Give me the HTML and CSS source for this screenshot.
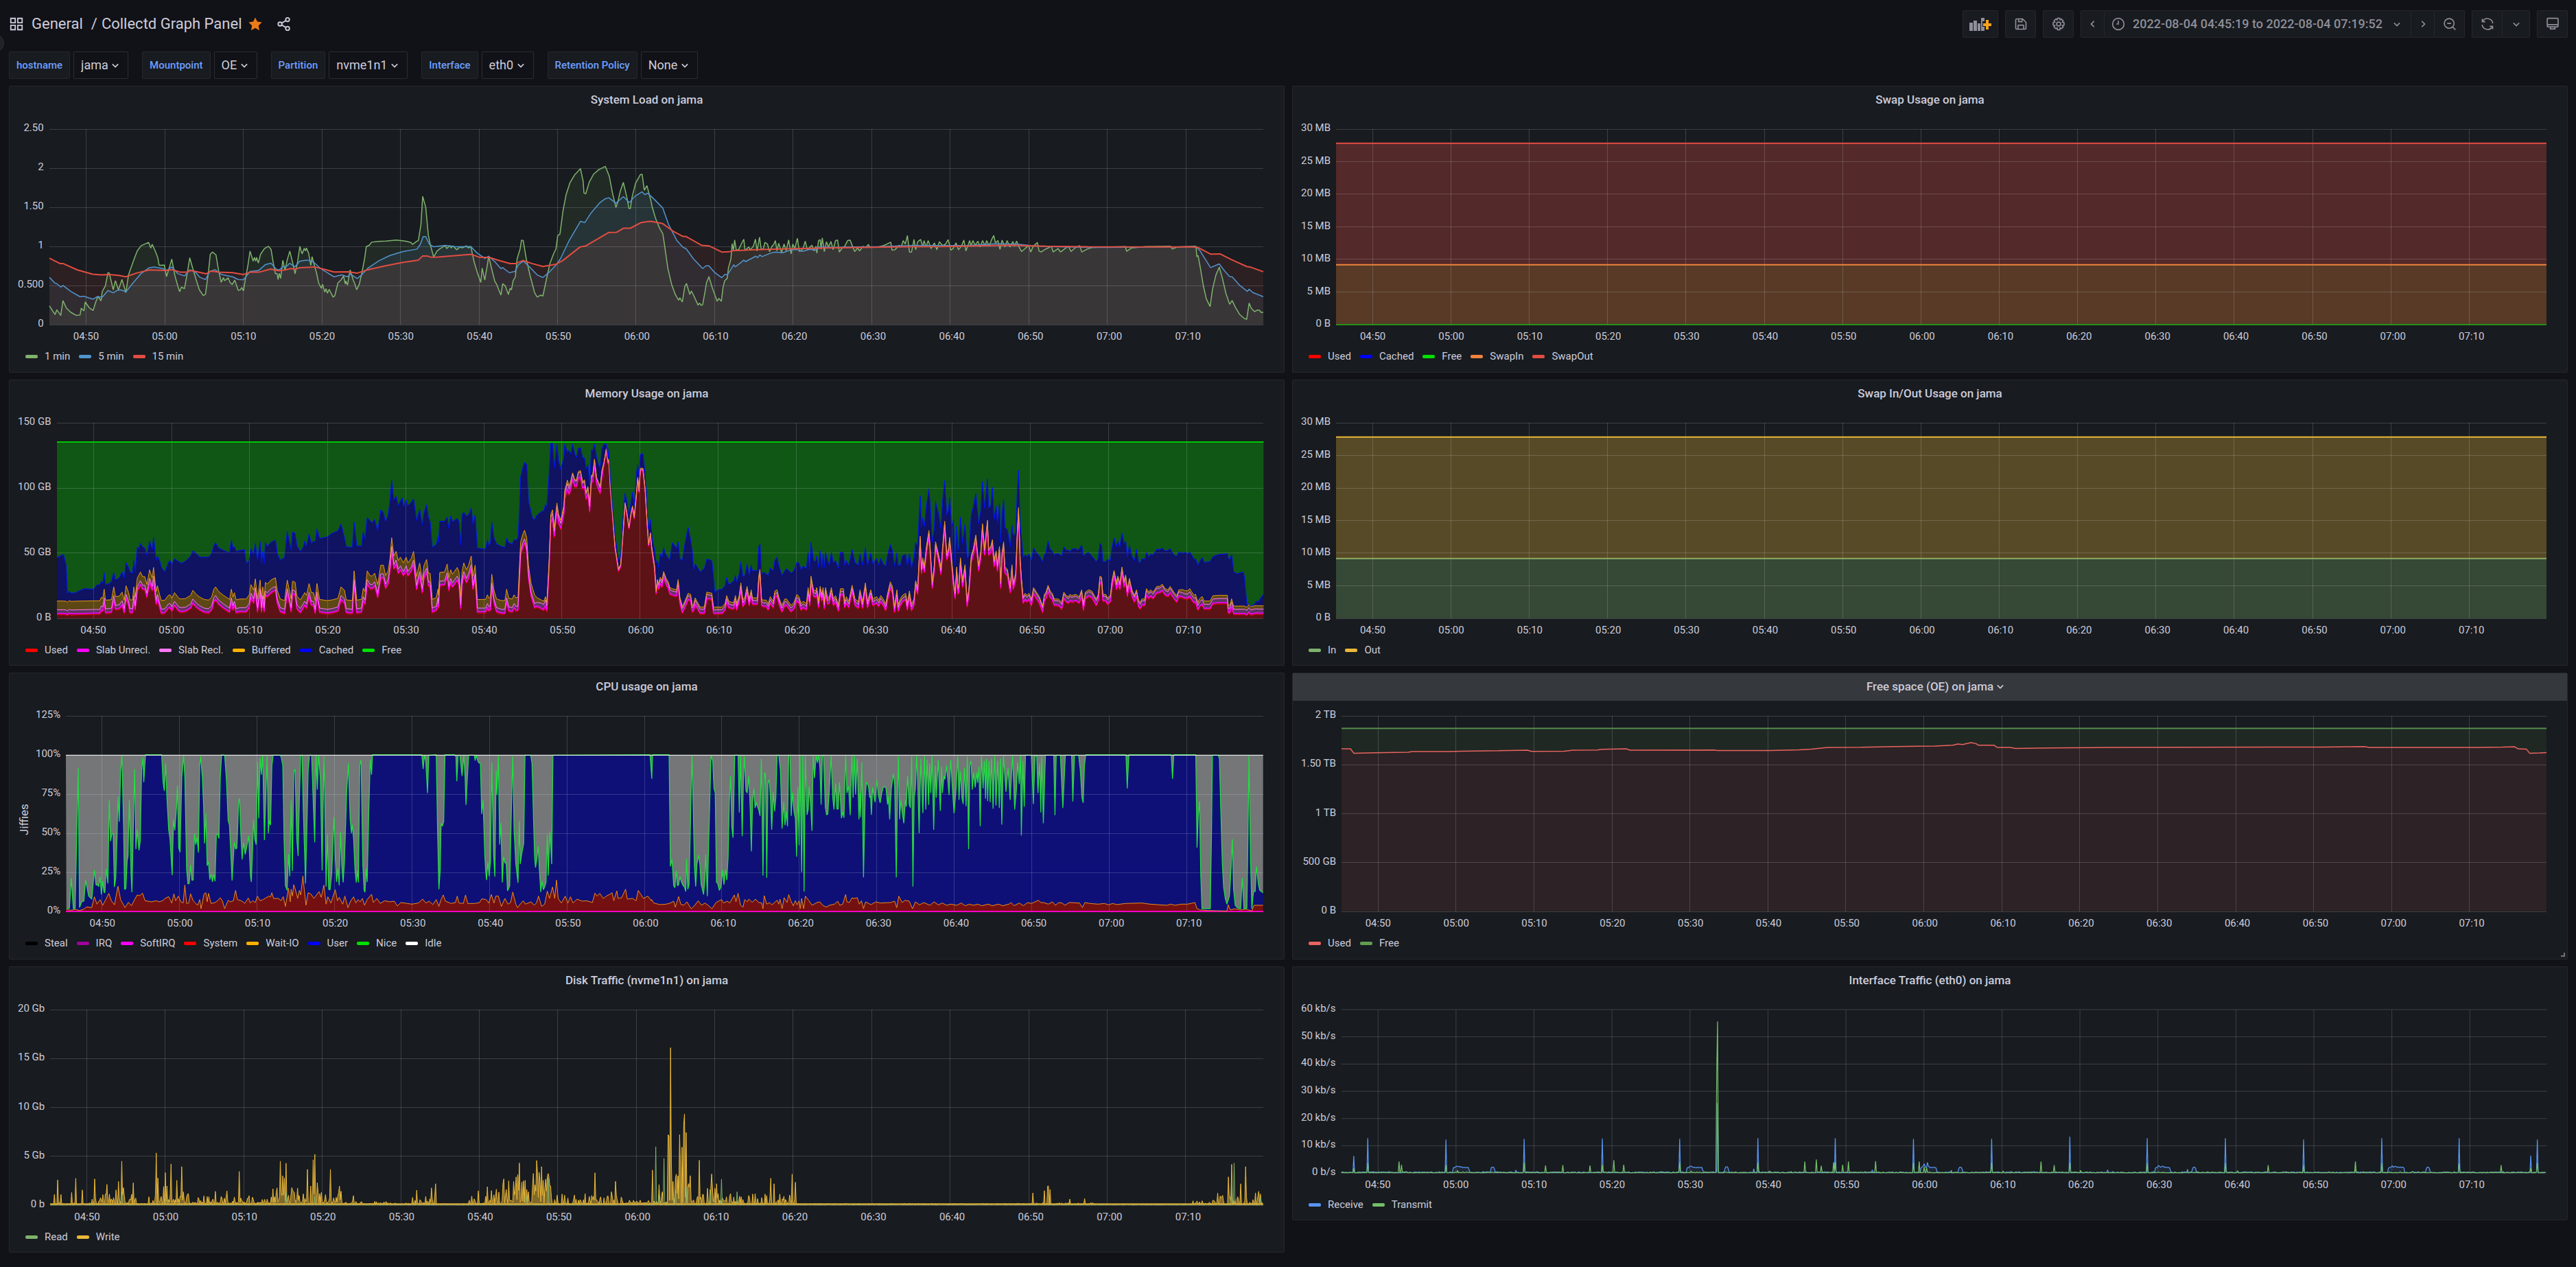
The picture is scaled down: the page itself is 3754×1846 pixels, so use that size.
FILE: index.html
```html
<!DOCTYPE html>
<html lang="en">
<head>
<meta charset="utf-8">
<meta name="viewport" content="width=device-width, initial-scale=1">
<title>Collectd Graph Panel</title>
<link rel="stylesheet" href="styles.css">
</head>
<body>
<svg class="sprite" aria-hidden="true">
  <symbol id="i-down" viewBox="0 0 24 24"><path d="M7 10l5 5 5-5"/></symbol>
  <symbol id="i-left" viewBox="0 0 24 24"><path d="M14 7l-5 5 5 5"/></symbol>
  <symbol id="i-right" viewBox="0 0 24 24"><path d="M10 7l5 5-5 5"/></symbol>
</svg>
<button class="menu-toggle" type="button" aria-label="Open menu"></button>
<header class="topbar">
  <a class="icon-link" href="#" aria-label="Dashboards"><svg class="icon" viewBox="0 0 24 24"><path d="M3 3h7v7H3zM14 3h7v7h-7zM3 14h7v7H3zM14 14h7v7h-7z"/></svg></a>
  <h1 class="crumbs"><a href="#">General</a><span class="slash">/</span><a href="#">Collectd Graph Panel</a></h1>
  <button class="bare star" type="button" aria-label="Unmark as favorite"><svg class="icon" viewBox="0 0 24 24"><path d="M12 1.5l3.2 6.8 7.3 1-5.3 5.2 1.3 7.5L12 18.300l-6.500 3.700 1.300-7.500L1.500 9.300l7.300-1z"/></svg></button>
  <button class="bare share" type="button" aria-label="Share dashboard"><svg class="icon" viewBox="0 0 24 24"><circle cx="5.500" cy="12" r="3"/><circle cx="17.500" cy="5" r="3"/><circle cx="17.500" cy="19" r="3"/><path d="M8.200 10.500l6.700-4M8.200 13.500l6.700 4"/></svg></button>
  <div class="tools">
    <button class="tool wide" type="button" aria-label="Add panel"><svg class="icon-add" viewBox="0 0 32 20"><path class="bars" d="M0 8h5v12H0zM6 5h5v15H6zM12 9h4v11h-4zM17 1h5v5h-3v8h3v6h-5z"/><path class="plus" d="M24 4h4v5h4v4h-4v5h-4v-5h-4V9h4z"/></svg></button>
    <button class="tool" type="button" aria-label="Save dashboard"><svg class="icon" viewBox="0 0 24 24"><path d="M3 5a2 2 0 0 1 2-2h10l6 6v10a2 2 0 0 1-2 2H5a2 2 0 0 1-2-2zM8 3v5h6V3M7 21v-6a1 1 0 0 1 1-1h8a1 1 0 0 1 1 1v6"/></svg></button>
    <button class="tool" type="button" aria-label="Dashboard settings"><svg class="icon" viewBox="0 0 24 24"><circle cx="12" cy="12" r="3.500"/><path d="M10 2h4l.7 2.800 2.400-1.400 2.900 2.900-1.500 2.400 3 .8v4.500l-3 .8 1.500 2.500-2.900 2.800-2.400-1.400L14 22h-4l-.7-3.300-2.400 1.400L4 17.300l1.500-2.500-3-.8V9.500l3-.8L4 6.300l2.900-2.900 2.400 1.400z"/></svg></button>
    <div class="tool-group">
      <button class="tool slim" type="button" aria-label="Earlier"><svg class="icon"><use href="#i-left"/></svg></button>
      <button class="tool range" type="button"><svg class="icon" viewBox="0 0 24 24"><circle cx="12" cy="12" r="10"/><path d="M12 6v6H8.500"/></svg><span>2022-08-04 04:45:19 to 2022-08-04 07:19:52</span><svg class="icon"><use href="#i-down"/></svg></button>
      <button class="tool slim" type="button" aria-label="Later"><svg class="icon"><use href="#i-right"/></svg></button>
      <button class="tool" type="button" aria-label="Zoom out"><svg class="icon" viewBox="0 0 24 24"><circle cx="11" cy="11" r="8.500"/><path d="M7.500 11h7M17.200 17.200L22 22"/></svg></button>
    </div>
    <div class="tool-group">
      <button class="tool" type="button" aria-label="Refresh"><svg class="icon" viewBox="0 0 24 24"><path d="M3 3v5h5M3.500 7.500a9.500 9.500 0 0 1 17.800 3.300M21 21v-5h-5M20.500 16.500A9.500 9.500 0 0 1 2.700 13.200"/></svg></button>
      <button class="tool narrow" type="button" aria-label="Refresh interval"><svg class="icon"><use href="#i-down"/></svg></button>
    </div>
    <button class="tool" type="button" aria-label="Cycle view mode"><svg class="icon" viewBox="0 0 24 24"><path d="M4 2h16a1.500 1.500 0 0 1 1.500 1.500v12A1.500 1.500 0 0 1 20 17H4a1.500 1.500 0 0 1-1.500-1.500v-12A1.500 1.500 0 0 1 4 2zM2.500 13h19M8 17v3.500h8V17"/></svg></button>
  </div>
</header>

<form class="variables">
  <div class="variable"><label for="v-host">hostname</label><span class="picker"><select id="v-host"><option>jama</option></select><svg class="icon"><use href="#i-down"/></svg></span></div>
  <div class="variable"><label for="v-mount">Mountpoint</label><span class="picker"><select id="v-mount"><option>OE</option></select><svg class="icon"><use href="#i-down"/></svg></span></div>
  <div class="variable"><label for="v-part">Partition</label><span class="picker"><select id="v-part"><option>nvme1n1</option></select><svg class="icon"><use href="#i-down"/></svg></span></div>
  <div class="variable"><label for="v-if">Interface</label><span class="picker"><select id="v-if"><option>eth0</option></select><svg class="icon"><use href="#i-down"/></svg></span></div>
  <div class="variable"><label for="v-ret">Retention Policy</label><span class="picker"><select id="v-ret"><option>None</option></select><svg class="icon"><use href="#i-down"/></svg></span></div>
</form>

<main class="dashboard">
  <section class="panel">
    <h2>System Load on jama</h2>
    <div class="chart" data-chart="load"><div class="y-axis"><span>2.50</span><span>2</span><span>1.50</span><span>1</span><span>0.500</span><span>0</span></div></div>
    <ul class="legend"><li class="c-olive">1 min</li><li class="c-sky">5 min</li><li class="c-brick">15 min</li></ul>
  </section>
  <section class="panel">
    <h2>Swap Usage on jama</h2>
    <div class="chart" data-chart="swap"><div class="y-axis"><span>30 MB</span><span>25 MB</span><span>20 MB</span><span>15 MB</span><span>10 MB</span><span>5 MB</span><span>0 B</span></div></div>
    <ul class="legend"><li class="c-red">Used</li><li class="c-blue">Cached</li><li class="c-green">Free</li><li class="c-orange">SwapIn</li><li class="c-brick">SwapOut</li></ul>
  </section>
  <section class="panel">
    <h2>Memory Usage on jama</h2>
    <div class="chart" data-chart="memory"><div class="y-axis"><span>150 GB</span><span>100 GB</span><span>50 GB</span><span>0 B</span></div></div>
    <ul class="legend"><li class="c-red">Used</li><li class="c-magenta">Slab Unrecl.</li><li class="c-pink">Slab Recl.</li><li class="c-amber">Buffered</li><li class="c-blue">Cached</li><li class="c-green">Free</li></ul>
  </section>
  <section class="panel">
    <h2>Swap In/Out Usage on jama</h2>
    <div class="chart" data-chart="swapio"><div class="y-axis"><span>30 MB</span><span>25 MB</span><span>20 MB</span><span>15 MB</span><span>10 MB</span><span>5 MB</span><span>0 B</span></div></div>
    <ul class="legend"><li class="c-olive">In</li><li class="c-yellow">Out</li></ul>
  </section>
  <section class="panel">
    <h2>CPU usage on jama</h2>
    <div class="chart named" data-chart="cpu"><span class="axis-name">Jiffies</span><div class="y-axis"><span>125%</span><span>100%</span><span>75%</span><span>50%</span><span>25%</span><span>0%</span></div></div>
    <ul class="legend"><li class="c-black">Steal</li><li class="c-purple">IRQ</li><li class="c-magenta">SoftIRQ</li><li class="c-red">System</li><li class="c-amber">Wait-IO</li><li class="c-blue">User</li><li class="c-green">Nice</li><li class="c-white">Idle</li></ul>
  </section>
  <section class="panel">
    <h2 class="active">Free space (OE) on jama<svg class="icon"><use href="#i-down"/></svg></h2>
    <div class="chart" data-chart="disk"><div class="y-axis"><span>2 TB</span><span>1.50 TB</span><span>1 TB</span><span>500 GB</span><span>0 B</span></div></div>
    <ul class="legend"><li class="c-coral">Used</li><li class="c-leaf">Free</li></ul>
    <span class="resize"></span>
  </section>
  <section class="panel">
    <h2>Disk Traffic (nvme1n1) on jama</h2>
    <div class="chart" data-chart="traffic"><div class="y-axis"><span>20 Gb</span><span>15 Gb</span><span>10 Gb</span><span>5 Gb</span><span>0 b</span></div></div>
    <ul class="legend"><li class="c-olive">Read</li><li class="c-yellow">Write</li></ul>
  </section>
  <section class="panel short">
    <h2>Interface Traffic (eth0) on jama</h2>
    <div class="chart" data-chart="net"><div class="y-axis"><span>60 kb/s</span><span>50 kb/s</span><span>40 kb/s</span><span>30 kb/s</span><span>20 kb/s</span><span>10 kb/s</span><span>0 b/s</span></div></div>
    <ul class="legend"><li class="c-azure">Receive</li><li class="c-lime">Transmit</li></ul>
  </section>
</main>
<script src="charts.js"></script>
</body>
</html>
```
FILE: styles.css
```css
* { box-sizing: border-box; }
body {
  margin: 0;
  padding: 15px 12px 20px 13px;
  background: #111217;
  color: #ccccdc;
  font: 15px/18px Roboto, "Liberation Sans", sans-serif;
}
.sprite { position: absolute; width: 0; height: 0; }
.icon { width: 22px; height: 22px; fill: none; stroke: currentColor; stroke-width: 2; flex: none; }
button, select { font: inherit; color: inherit; }
a { color: inherit; text-decoration: none; }
.menu-toggle {
  position: absolute; left: -22px; top: 49px; width: 28px; height: 28px;
  padding: 0; border: 1px solid #2c2d33; border-radius: 50%; background: #202226;
}

.topbar { display: flex; align-items: center; height: 40px; }
.icon-link { display: flex; }
.crumbs { display: flex; margin: 0 0 0 11px; font-size: 22px; font-weight: 400; line-height: 30px; }
.slash { margin: 0 6px 0 12px; }
.bare { display: flex; padding: 0; border: 0; background: none; }
.star { margin-left: 8px; color: #eb7b18; }
.star .icon { fill: currentColor; stroke: none; }
.share { margin-left: 20px; }
.tools { display: flex; gap: 10px; margin-left: auto; color: #8e8e99; }
.tool {
  display: flex; align-items: center; justify-content: center;
  width: 45px; height: 40px; padding: 0;
  background: #181b1f; border: 1px solid #25272c; border-radius: 2px;
}
.tool .icon { width: 20px; height: 20px; }
.wide { width: 52px; }
.slim { width: 35px; }
.narrow { width: 41px; }
.range { width: 448px; justify-content: space-between; padding: 0 10px; font-size: 18px; font-weight: 500; }
.tool-group { display: flex; }
.tool-group .tool + .tool { margin-left: -1px; }
.icon-add { width: 32px; height: 20px; }
.bars { fill: #8e8e99; }
.plus { fill: #f9a11f; }

.variables { display: flex; gap: 20px; margin-top: 20px; }
.variable { display: flex; gap: 5px; height: 40px; }
.variable label {
  display: flex; align-items: center; padding: 0 10px;
  background: #181b1f; border: 1px solid #25272c; border-radius: 2px;
  color: #6e9fff; font-weight: 500;
}
.picker {
  display: flex; align-items: center; padding: 0 8px 0 10px;
  border: 1px solid #2c2d33; border-radius: 2px;
}
.picker select {
  appearance: none; padding: 0; border: 0; background: none;
  font-size: 18px; line-height: 22px;
}
.picker .icon { width: 20px; height: 20px; }

.dashboard {
  display: grid; grid-template-columns: repeat(2, minmax(0, 1fr));
  grid-template-rows: 418px 417px 418px 417px;
  gap: 10px 11px; align-items: start; margin-top: 10px;
}
.panel { position: relative; height: 100%; background: #181b1f; border: 1px solid #25272c; border-radius: 2px; }
.short { height: 370px; }
.panel h2 {
  display: flex; align-items: center; justify-content: center;
  height: 40px; margin: 0; padding-bottom: 3px;
  font-size: 17px; font-weight: 500; line-height: 22px;
}
.panel h2.active { background: #35383c; padding-left: 20px; }
.active .icon { width: 20px; height: 20px; }
.chart {
  display: grid; grid-template-columns: auto minmax(0, 1fr); column-gap: 8px;
  margin-top: 22px; padding: 0 30px 0 12px;
}
.named { grid-template-columns: 18px auto minmax(0, 1fr); }
.axis-name { writing-mode: vertical-rl; transform: rotate(180deg); margin-top: 18px; text-align: center; font-size: 17px; }
.y-axis { display: flex; flex-direction: column; justify-content: space-between; margin: -11px 0 -7px; text-align: right; }
.plot { display: block; width: 100%; height: 285px; overflow: visible; }
.short .plot { height: 238px; }
.plot path, .plot line { vector-effect: non-scaling-stroke; fill: none; stroke-linejoin: bevel; }
.plot .fill { stroke: none; }
.plot .grid { stroke: #f0faff; stroke-opacity: .17; shape-rendering: crispEdges; }
.x-axis { display: flex; grid-column-end: -1; margin: 8px 0 0 calc(-100% * .317 / 154.55); text-align: center; }
.x-axis span { flex: 0 0 calc(100% * 10 / 154.55); }

.legend { display: flex; gap: 13px; list-style: none; margin: 11px 0 0; padding: 0 23px; }
.legend li { display: flex; align-items: center; gap: 10px; }
.legend li::before { content: ""; width: 18px; height: 5px; border-radius: 2px; background: var(--c); }
.resize {
  position: absolute; right: 3px; bottom: 3px; width: 6px; height: 6px;
  border: solid #72747a; border-width: 0 2px 2px 0;
}
.c-olive { --c: #7eb26d; }
.c-sky { --c: #5195ce; }
.c-brick { --c: #e24d42; }
.c-red { --c: #ff0000; }
.c-blue { --c: #0000ff; }
.c-green { --c: #00e000; }
.c-orange { --c: #ef843c; }
.c-magenta { --c: #ff00ff; }
.c-pink { --c: #ff78f8; }
.c-amber { --c: #ffb000; }
.c-yellow { --c: #eab839; }
.c-black { --c: #000000; }
.c-purple { --c: #a000a0; }
.c-white { --c: #ffffff; }
.c-coral { --c: #ea6460; }
.c-leaf { --c: #629e51; }
.c-azure { --c: #5794f2; }
.c-lime { --c: #73bf69; }
```
FILE: charts.js
```js
// Each recording is a list of readings "x,a[,b]" taken in one or two strips.
// A strip's [origin, step] turns x into minutes since 04:45:19; a reading is
// turned into a share of the axis with the chart's base and span.
const MINUTES = 154.55;
const FIRST_TICK = 4.683;

const loadStrips = [[-6.176, .055641], [76.71, .052859]];
const memStrips = [[-7.109, .055973], [76.27, .053174]];
const cpuStrips = [[-8.4, .056438], [75.62, .053617]];

function read(strips, base, span, ...texts) {
  return texts.flatMap((text, i) => text.trim().split(/\s+/).map(p => {
    const [x, ...ys] = p.split(',').map(Number);
    const t = Math.min(MINUTES, Math.max(0, strips[i][0] + x * strips[i][1]));
    return [t, ...ys.map(y => (base - y) / span)];
  }));
}
const flat = v => [[0, v], [MINUTES, v]];
const path = pts => 'M' + pts.map(([t, v]) => t.toFixed(3) + ' ' + (1 - v).toFixed(4)).join('L');

const load1 = read(loadStrips, 1057, 854, `111,975 124,1013 128,992 137,1017 142,952 150,985 160,1003 172,1016 181,1015 184,985 190,997 193,958 202,983 211,995 217,958 222,933 229,953 232,912 239,888 245,830 248,832 257,905 262,865 269,905 277,860 286,917 292,840 303,780 312,735 321,712 338,698 343,723 346,706 353,735 359,765 362,798 374,797 379,847 385,810 391,771 398,842 405,890 409,913 413,893 420,900 427,825 432,765 440,818 447,862 454,905 463,930 468,925 475,825 479,750 484,740 492,752 498,820 504,872 509,852 512,865 520,853 524,872 529,882 535,863 543,907 548,905 551,895 555,910 559,862 565,800 570,736 577,780 580,763 583,780 585,763 589,788 594,750 603,725 612,715 618,728 623,785 628,835 632,833 634,860 637,833 640,855 645,776 650,820 655,775 661,736 668,790 673,835 679,780 684,715 689,748 694,724 697,735 699,722 704,745 709,798 712,760 716,790 722,830 727,875 733,898 736,881 741,915 744,900 747,920 751,903 760,937 764,930 771,875 778,862 784,845 788,880 789,866 793,884 799,818 806,862 810,880 814,905 820,880 826,830 832,770 836,716 843,710 848,697 862,694 880,692 905,688 925,692 938,698 942,707 950,695 955,690 961,620 965,497 972,545 978,668 983,712 990,762 998,735 1005,725 1017,712 1020,725 1027,712 1030,722 1034,713 1043,730 1050,718 1056,722 1065,713 1070,723 1075,715 1083,785 1090,830 1098,873 1101,810 1107,862 1113,795 1116,758 1123,815 1130,868 1134,880 1144,928 1148,878 1154,888 1161,925 1165,898 1168,905 1172,865 1177,848 1181,770 1188,725 1191,688 1195,690 1202,770 1211,845 1221,917 1227,937 1235,928 1240,932 1248,860 1256,790 1264,750 1270,725 1274,668 1279,662 1286,560 1293,490 1302,437 1313,402 1326,376 1332,430 1334,482 1338,486 1346,435 1356,400 1368,380 1383,366 1392,410 1400,490 1404,520 1407,545 1411,525 1417,475 1424,436 1432,500 1437,550 1440,550 1444,500 1452,440 1463,402 1467,400 1472,470 1478,450 1487,515`,
`0,540 8,590 18,635 26,660 31,720 38,810 47,880 56,925 64,950 67,940 73,958 79,890 83,877 91,925 95,910 103,940 111,972 114,963 119,973 122,970 128,910 131,875 137,847 145,895 157,955 161,942 167,955 171,895 175,865 181,855 184,810 190,770 193,703 196,733 199,687 203,733 209,728 215,705 221,684 224,733 233,718 237,730 244,715 249,684 253,735 259,675 263,730 268,725 272,698 278,705 283,738 290,712 293,708 297,690 301,735 305,702 312,742 318,705 323,735 329,687 335,748 339,705 344,725 350,680 355,738 363,727 369,693 374,730 385,710 390,735 395,715 397,745 401,690 405,686 407,728 410,678 415,738 420,695 425,718 431,694 436,730 442,690 447,688 451,740 458,722 464,715 471,690 477,688 483,715 488,738 495,723 500,735 508,715 515,720 521,707 525,720 545,718 560,710 575,697 578,732 585,730 595,710 600,718 605,690 610,705 615,668 620,740 625,740 631,685 635,730 640,695 647,685 652,718 655,690 660,718 665,690 672,725 680,700 686,730 692,695 700,712 707,705 713,686 720,732 725,725 732,700 738,730 745,715 751,688 756,735 765,690 768,712 773,690 778,710 785,693 790,718 796,690 802,712 806,690 812,715 818,685 823,668 827,700 833,690 838,728 843,688 850,718 855,690 862,718 869,694 873,715 878,692 884,718 890,738 900,722 907,712 912,740 918,715 928,698 932,735 937,740 945,730 962,715 966,740 978,725 984,740 998,720 1003,715 1009,738 1020,720 1030,712 1035,740 1048,727 1060,720 1140,716 1143,737 1155,722 1190,716 1249,715 1253,727 1265,718 1310,715 1312,760 1315,755 1321,815 1328,890 1335,945 1344,978 1350,900 1358,840 1366,806 1373,850 1382,920 1391,968 1397,952 1406,985 1415,1012 1425,1028 1432,1034 1438,963 1443,985 1451,1000 1458,993 1463,995 1467,1004 1472,1003`);
const load5 = read(loadStrips, 1057, 854, `111,850 124,876 128,878 137,893 142,886 160,912 181,935 190,933 193,935 211,946 220,935 232,937 245,908 257,918 265,908 275,905 286,914 300,880 320,835 338,810 350,805 370,812 380,820 391,805 405,835 420,844 432,818 445,828 455,850 468,860 478,825 490,817 505,838 530,848 543,860 555,861 570,825 590,820 605,795 618,789 630,815 637,818 645,803 652,805 661,789 672,805 684,780 700,775 715,783 730,810 745,828 762,848 780,840 793,848 799,835 815,856 825,840 840,810 865,778 890,755 920,738 952,727 960,705 966,673 972,673 980,705 990,717 1017,711 1040,717 1075,716 1090,745 1100,758 1107,768 1116,758 1130,782 1144,812 1148,808 1163,830 1176,825 1184,795 1195,780 1207,800 1227,840 1240,851 1256,825 1270,797 1280,770 1300,690 1326,606 1336,611 1350,570 1370,525 1383,507 1391,503 1407,527 1424,498 1438,524 1450,497 1467,477 1473,489 1480,483 1489,500`,
`0,500 26,548 40,620 60,690 75,720 82,725 100,770 122,812 130,800 137,800 150,828 168,852 175,838 182,838 197,795 200,805 215,785 221,775 225,782 250,758 254,765 260,752 265,760 285,745 297,740 315,743 335,730 350,730 362,737 380,728 395,732 402,718 440,720 480,718 540,717 620,712 700,712 760,712 825,704 880,706 912,712 950,716 1060,720 1140,719 1310,717 1320,735 1345,808 1366,792 1380,825 1391,847 1397,848 1415,885 1434,912 1438,902 1447,917 1472,935`);
const load15 = read(loadStrips, 1057, 854, `111,767 135,790 142,790 175,818 210,837 230,840 248,838 270,842 286,848 310,832 340,818 375,820 392,817 410,828 425,828 435,820 470,835 480,823 500,828 530,830 555,838 570,828 590,828 617,814 635,822 650,818 663,812 672,815 685,808 718,805 745,818 762,827 795,826 815,832 840,817 880,800 920,785 955,775 965,757 975,757 985,763 1000,762 1076,750 1095,763 1118,764 1145,780 1165,790 1178,790 1194,777 1215,790 1240,803 1270,793 1285,778 1325,718 1337,714 1390,655 1408,654 1425,636 1440,636 1465,611 1483,606`,
`0,607 26,616 50,648 75,672 82,672 120,711 137,713 168,740 185,739 195,734 250,730 330,726 420,722 620,717 700,716 860,710 950,715 1050,717 1300,718 1315,720 1345,749 1368,748 1395,773 1432,803 1440,805 1472,826`);

// Used and cached tops of the memory stack.
const memory = read(memStrips, 1053, 856, `127,1037,787 142,1037,773 148,1038,820 151,1042,945 155,1035,933 158,1038,942 168,1038,942 178,1037,932 190,1037,923 211,1036,925 218,1036,907 225,1036,905 229,1020,890 232,1025,900 235,985,853 238,1033,905 248,1032,900 252,1030,890 257,975,853 261,1018,885 270,1015,875 276,998,850 281,1033,875 285,970,810 291,1000,830 294,1032,850 300,1032,855 303,975,800 306,1020,850 311,935,740 314,925,748 318,910,725 323,930,740 328,930,745 333,965,778 339,900,715 345,935,750 348,890,700 354,995,800 357,970,780 362,1010,800 366,1035,830 374,1033,850 382,1012,808 386,1010,800 390,1025,817 396,1000,792 406,1025,805 412,1028,812 421,1026,803 433,1012,780 438,990,757 447,1010,772 454,1020,785 464,1030,785 474,1033,785 481,1020,770 486,985,735 490,975,722 497,995,745 508,1012,755 522,1030,768 526,985,712 530,1020,745 533,1000,738 537,1032,760 546,1028,755 556,1028,752 560,1028,812 567,1010,800 571,965,748 577,990,773 581,940,725 586,1028,800 592,945,718 595,1028,813 598,975,760 601,1028,813 604,955,720 608,963,738 617,945,720 627,935,710 631,990,770 638,1028,798 648,1035,787 654,945,672 663,1028,755 666,950,675 672,955,680 676,1015,735 684,1032,760 691,1010,740 694,1000,715 698,1012,738 704,960,683 709,1000,725 714,1000,715 718,1035,720 722,960,662 728,1030,703 745,1035,697 757,1032,680 770,1025,670 777,975,640 785,990,700 789,1032,740 803,1035,742 807,905,632 813,1033,735 824,1030,738 828,980,672 832,995,705 837,905,612 843,925,625 848,928,635 854,915,620 861,965,670 868,880,578 874,880,590 879,925,630 885,905,600 889,850,540 893,760,450 898,840,535 903,820,518 908,860,560 913,845,540 917,860,525 920,870,565 926,845,535 930,870,560 938,850,545 943,820,530 950,930,625 957,870,575 963,945,645 967,880,590 973,855,555 977,915,610 981,915,630 986,1030,742 995,1022,730 999,985,695 1000,1010,720 1003,912,628 1014,910,628 1020,875,610 1024,935,660 1028,900,605 1032,920,630 1043,890,615 1047,910,630 1051,1015,735 1054,910,600 1058,870,588 1064,900,605 1069,880,600 1075,840,570 1079,930,640 1084,880,600 1089,1030,745 1108,1030,750 1112,1010,710 1116,1025,735 1119,1020,720 1122,920,632 1127,990,700 1133,1028,728 1144,1035,738 1152,1035,742 1156,985,702 1161,1025,722 1169,1028,728 1173,1010,708 1177,1022,712 1182,1022,700 1185,900,600 1188,780,435 1193,745,395 1197,727,370 1202,760,380 1206,880,540 1212,960,590 1216,985,618 1220,1010,620 1226,1005,600 1236,1015,585 1241,1020,583 1245,1000,555 1248,1025,565 1253,850,430 1257,640,287 1261,620,287 1265,700,395 1271,590,290 1275,640,365 1280,665,400 1287,600,350 1289,535,290 1295,490,325 1299,515,318 1303,490,335 1307,450,290 1312,480,335 1316,480,350 1320,445,310 1325,440,305 1330,490,350 1334,480,350 1338,535,400 1342,510,380 1346,590,470 1350,460,315 1353,460,320 1357,390,290 1362,470,350 1366,490,380 1370,510,395 1374,440,310 1379,380,290 1384,325,290 1388,380,350 1390,370,312 1393,480,430 1398,600,560 1404,750,690 1412,850,800 1417,830,780 1422,700,620 1427,560,505 1431,600,540 1436,665,600 1441,600,540 1444,575,500 1448,620,560 1453,520,420 1456,450,380 1459,505,430 1462,410,335 1468,410,333 1473,500,420 1478,660,580 1481,740,660 1485,700,620 1488,760,680`,
`0,780,710 5,840,750 9,950,810 12,905,800 15,930,830 19,905,770 23,920,785 27,880,745 33,910,775 38,925,790 42,950,795 48,955,722 58,960,745 62,915,718 66,990,790 72,1033,800 78,1010,730 86,975,655 92,980,710 96,1028,760 99,1025,840 103,995,815 107,1010,825 115,1035,850 125,1035,835 131,970,793 143,975,800 147,1033,870 150,1037,940 155,1035,930 168,1035,925 175,1020,910 179,985,875 184,1010,905 192,1015,895 196,1015,890 200,985,865 203,1020,895 209,985,860 213,930,805 218,1005,870 223,990,865 228,945,815 233,1000,865 238,960,820 241,995,845 253,995,843 256,900,740 259,870,727 263,1000,860 267,1005,850 274,1005,858 279,1020,865 284,990,833 291,1010,845 295,965,800 300,960,785 305,995,825 312,1028,865 319,1000,845 323,1000,835 334,1028,855 341,1015,845 348,980,808 353,990,810 358,1020,840 363,1010,825 371,1020,835 375,950,765 379,1000,840 382,900,720 388,960,800 393,965,805 396,950,780 400,1010,830 404,945,758 408,980,830 411,950,770 414,1015,830 417,950,765 422,995,800 426,990,820 431,950,765 436,1000,810 441,985,800 448,1025,835 453,955,762 460,955,765 463,1010,820 467,990,800 473,1010,822 481,940,752 488,1000,810 496,1012,820 500,960,770 506,1012,820 513,930,745 518,1010,820 526,960,768 531,1000,815 540,990,790 545,1005,820 550,985,790 556,1000,815 562,1022,825 566,980,780 573,925,730 578,945,755 583,1030,825 589,960,767 592,1025,820 597,1000,822 602,985,780 610,975,772 614,1020,820 619,965,770 624,1022,830 630,1000,790 634,920,720 639,950,735 645,725,517 648,860,655 651,820,610 655,855,650 660,770,560 666,700,487 669,770,550 674,925,720 679,850,660 682,750,543 690,810,600 695,865,660 699,770,540 704,660,450 709,800,600 713,780,580 716,730,525 721,830,650 725,910,620 729,970,820 733,860,650 736,950,755 738,940,745 742,820,610 747,920,725 753,850,640 758,1005,790 762,960,780 768,810,600 773,780,565 779,720,508 786,850,640 791,790,580 795,670,455 800,780,570 807,655,442 810,780,570 815,770,560 819,740,480 823,830,620 828,790,560 831,850,640 836,770,550 839,925,720 842,800,600 846,750,533 849,860,655 855,870,665 862,945,740 866,850,645 869,930,690 875,890,680 879,700,490 882,600,405 886,830,650 889,910,700 893,990,785 898,975,775 902,985,783 907,975,772 913,1000,800 918,950,745 925,970,765 932,990,780 940,1030,805 944,980,775 948,970,765 953,940,715 958,965,750 963,975,758 968,1000,775 972,1000,770 978,1000,770 986,1015,780 991,970,740 997,985,755 1002,990,755 1006,980,762 1010,985,750 1020,980,747 1024,985,755 1028,990,750 1034,960,732 1038,1020,780 1043,970,770 1051,960,765 1058,965,780 1063,980,790 1069,1000,805 1074,980,790 1078,900,725 1082,905,735 1085,980,805 1092,980,805 1096,995,795 1103,985,800 1107,920,745 1112,875,702 1118,930,740 1121,900,715 1126,930,740 1131,860,680 1136,920,725 1140,895,715 1144,960,785 1149,910,735 1155,960,780 1161,985,800 1166,960,752 1171,1005,805 1175,1015,810 1179,1000,792 1186,1000,795 1190,955,765 1196,970,785 1200,960,772 1206,970,775 1215,945,750 1222,945,752 1228,935,745 1235,955,758 1242,960,755 1247,945,748 1256,970,775 1263,985,782 1268,960,762 1277,965,768 1284,970,765 1290,970,770 1294,960,762 1299,975,775 1305,990,795 1308,985,790 1314,1020,820 1318,1005,805 1324,995,787 1329,1015,808 1343,1015,805 1350,992,783 1365,990,773 1385,990,770 1387,1033,790 1391,1033,795 1395,1005,773 1400,1037,848 1407,1037,858 1423,1037,850 1426,1037,870 1432,1042,995 1437,1030,988 1441,1040,1000 1448,1037,995 1454,1035,980 1460,1036,978 1475,1036,947`);
const memUsed = memory.map(([t, u]) => [t, u]);
const memCached = memory.map(([t, , c]) => [t, c]);
// Slab and buffer thickness changes in steps as the caches are squeezed.
const raise = f => memory.map(([t, u, c]) => [t, Math.min(u + f(t) / 856, c)]);
const memSlabU = raise(() => 6);
const memSlabR = raise(t => t < 62 ? 22 : t < 70 ? 28 : t < 76 ? 9 : t < 84 ? 22 : t < 115 ? 20 : 24);
const memBuf = raise(t => t < 61.5 ? 60 : t < 66 ? 42 : t < 70 ? 34 : t < 77 ? 14 : t < 144 ? 32 : 38);

const nice = read(cpuStrips, 1057, 854, `150,1045 157,1043 161,912 166,1045 170,1045 174,700 177,430 180,1040 185,1015 190,1012 194,920 201,990 208,1003 214,877 218,942 221,940 224,948 227,907 230,982 233,925 236,972 238,975 241,870 245,935 248,568 251,750 254,718 257,717 260,950 263,910 266,720 268,555 271,665 274,450 277,375 281,700 283,960 286,958 289,835 291,815 294,570 298,900 300,973 303,700 306,435 309,785 312,700 316,790 319,750 322,440 325,385 327,493 331,373 368,373 371,490 374,530 377,410 380,560 384,700 387,740 392,898 395,655 398,703 402,600 404,507 407,780 410,798 414,470 418,375 421,470 425,870 428,937 431,935 434,855 437,920 440,920 443,718 446,765 449,733 452,800 455,420 457,380 461,470 464,600 466,760 469,630 472,857 475,840 478,918 481,895 484,928 487,895 490,925 493,722 496,718 499,738 502,470 505,373 512,375 516,480 520,660 523,680 529,922 534,755 537,785 540,780 544,580 546,562 549,720 552,830 555,755 559,808 563,770 567,727 571,900 573,928 576,780 578,658 581,740 584,765 587,405 590,650 593,385 596,460 599,375 603,745 606,560 609,375 612,715 614,660 617,680 620,420 623,375 638,375 641,380 645,420 648,750 651,945 655,965 658,808 661,903 664,573 667,880 670,450 673,435 677,740 680,815 683,560 686,375 689,375 692,620 697,935 700,700 703,440 706,375 711,375 715,600 718,755 721,375 724,525 727,375 731,480 735,878 739,380 741,540 744,948 747,720 750,960 753,963 757,890 762,645 765,820 768,928 771,870 774,943 777,710 780,860 783,930 786,840 791,540 795,410 799,650 802,715 804,678 807,740 810,870 813,930 816,880 818,930 821,420 824,395 828,850 831,965 833,973 836,870 838,928 842,600 845,395 848,460 850,373 963,373 966,435 969,375 972,400 976,540 979,375 996,373 999,700 1002,960 1005,880 1007,672 1010,685 1013,665 1016,373 1038,373 1041,380 1043,488 1046,375 1050,375 1055,465 1059,375 1062,470 1064,592 1067,480 1070,375 1083,375 1085,398 1087,375 1092,405 1097,412 1100,632 1103,570 1107,810 1109,880 1111,920 1114,840 1117,903 1120,840 1123,405 1127,800 1130,905 1133,440 1135,548 1138,375 1141,765 1144,670 1147,930 1150,818 1153,845 1156,845 1159,967 1164,945 1168,600 1171,380 1174,700 1178,850 1183,932 1186,662 1188,850 1192,800 1196,760 1199,375 1212,375 1215,410 1218,620 1221,820 1223,865 1226,830 1229,770 1232,880 1235,972 1238,925 1241,962 1244,950 1247,930 1250,720 1252,900 1256,708 1260,850 1263,375 1485,373 1489,478`,
`2,373 42,373 45,860 49,830 53,945 56,953 59,880 62,945 65,940 68,905 72,930 76,945 79,950 82,970 84,828 87,960 90,940 93,700 97,375 100,600 103,860 106,948 109,850 113,812 116,850 119,940 122,960 125,983 128,920 130,808 134,990 137,780 140,570 143,375 147,400 150,520 153,540 156,930 159,935 163,965 167,950 171,875 174,940 178,875 181,920 184,820 187,580 190,465 193,690 196,735 200,375 208,375 211,625 214,375 218,728 221,470 223,380 227,530 230,540 234,465 237,600 240,795 243,580 246,520 249,605 252,582 255,600 258,615 261,640 264,390 268,900 272,450 274,460 277,910 280,500 283,480 286,560 289,700 293,535 296,620 299,560 302,375 306,375 310,440 314,695 318,580 321,680 324,620 327,685 330,375 333,375 336,640 339,538 343,625 346,650 349,818 352,515 355,768 357,375 361,885 364,375 367,970 370,378 374,635 377,610 379,510 383,600 386,705 389,375 392,475 396,375 399,408 402,375 405,430 408,590 411,375 414,380 418,600 421,635 424,632 428,520 432,378 436,560 439,612 443,498 446,610 449,610 452,492 457,650 460,622 463,648 467,375 470,540 474,510 478,637 482,375 485,560 488,375 491,545 495,390 499,655 502,540 503,645 506,405 510,908 514,560 517,492 522,510 525,560 527,552 529,635 532,515 536,560 538,580 542,483 546,550 550,583 554,540 558,512 564,516 568,590 570,555 573,655 577,520 582,455 585,500 589,908 591,640 594,380 597,655 600,570 603,620 607,672 611,570 613,600 616,465 620,590 623,605 626,380 629,948 632,560 635,520 638,375 641,520 644,715 648,390 653,628 657,378 660,612 663,395 667,592 669,410 672,540 675,375 679,700 683,420 685,560 690,395 695,618 698,425 700,540 704,465 706,480 710,420 716,548 720,395 724,520 728,628 733,520 737,378 740,570 743,445 747,560 750,588 753,430 757,598 760,380 763,785 766,420 769,400 772,525 775,450 779,515 783,450 785,495 788,425 791,685 794,378 798,520 801,400 804,565 806,390 809,575 812,400 815,580 818,390 822,608 826,375 829,595 833,400 837,605 840,390 843,678 847,378 853,535 858,430 863,570 869,378 874,612 878,530 881,405 885,500 888,375 890,725 894,400 897,600 900,375 914,375 919,588 923,380 927,375 930,540 934,410 937,625 939,380 943,672 948,375 968,375 971,637 974,375 984,375 990,605 996,375 1011,375 1014,577 1018,375 1028,375 1032,440 1036,560 1039,583 1042,420 1045,373 1142,373 1145,520 1149,373 1251,373 1254,478 1257,373 1310,373 1313,778 1316,640 1319,575 1322,900 1325,1045 1345,1045 1348,700 1350,375 1364,375 1367,390 1370,600 1374,850 1377,950 1381,1000 1385,1025 1391,990 1395,870 1398,742 1401,960 1405,1030 1410,1040 1418,1045 1422,910 1426,1045 1433,1043 1436,700 1438,375 1442,850 1445,1045 1449,970 1453,970 1456,860 1461,940 1464,965 1472,975`);
const system = read(cpuStrips, 1057, 854, `150,1048 160,1052 170,1048 180,1053 190,1047 196,1037 208,1040 214,993 220,1025 227,1005 233,1030 240,1005 247,978 253,1010 260,1028 268,947 274,1005 284,1040 292,1017 299,1032 306,1005 312,985 318,988 324,977 330,1010 345,1015 355,1010 362,1015 370,1010 376,1000 384,992 391,1020 396,980 400,1010 406,990 412,1015 417,1020 421,942 425,1022 430,1020 434,980 440,1010 445,1020 450,1030 455,1005 458,1045 465,980 469,975 472,1015 475,978 481,1022 490,1018 497,1008 502,997 507,1012 512,1045 520,1008 525,1015 532,1010 537,965 541,1005 552,1012 558,1022 566,998 571,1020 576,1010 582,1018 587,990 593,1010 600,1005 606,998 613,990 617,993 620,975 624,1000 635,1000 641,1010 646,992 651,1035 658,955 662,1015 664,960 667,990 670,940 675,970 679,1000 683,965 686,985 691,902 694,960 698,1030 703,975 710,982 716,1000 722,985 728,970 733,995 739,942 744,1025 748,993 755,1020 765,962 770,1010 774,995 782,1025 787,990 794,1040 800,1012 807,993 812,1020 817,1005 822,1015 827,1000 832,1030 838,1005 848,982 852,1018 860,1000 868,1022 878,1010 890,1015 900,1012 907,1033 915,1018 930,1022 940,1025 955,1020 965,1003 972,1020 980,1012 988,1027 996,1005 1002,1035 1007,1005 1012,985 1017,1012 1030,1022 1040,1018 1044,990 1048,1020 1058,1022 1063,985 1068,1022 1085,1022 1095,1018 1100,1002 1110,1005 1116,1020 1122,983 1128,1020 1132,990 1138,990 1145,1035 1153,1000 1160,1025 1166,1018 1171,972 1178,1025 1182,1040 1188,1025 1195,1010 1200,1025 1213,1015 1220,1030 1225,1020 1230,990 1237,1035 1244,1025 1250,968 1255,1000 1262,950 1267,1000 1271,920 1275,1000 1282,1020 1291,990 1297,1020 1303,993 1309,1020 1318,1003 1330,1012 1340,1010 1353,1018 1359,977 1364,990 1370,978 1378,1000 1385,990 1395,980 1398,975 1402,1010 1409,967 1412,1000 1420,997 1429,960 1433,1003 1445,1000 1453,1010 1458,965 1463,980 1470,1000 1480,990 1488,1010`,
`0,1005 5,1020 20,1027 35,1025 45,1020 53,1012 57,1038 65,992 70,1025 77,1030 85,1015 95,1045 103,1032 112,1010 120,1030 128,1020 136,1030 145,1045 155,1018 168,1005 173,1020 182,1012 188,1020 199,985 203,1015 208,977 214,1030 220,1038 224,1005 230,1015 234,1003 242,1017 250,1003 257,1017 265,1020 268,1045 271,988 277,1025 284,1018 289,1028 296,1018 302,1008 306,1025 309,1003 314,1045 319,997 326,1018 330,983 335,1010 341,1032 346,1010 350,1028 355,1010 358,1045 361,1000 366,1045 370,990 378,1008 386,1030 398,1018 405,1015 412,1030 420,1038 428,1030 440,1025 448,1012 453,1030 460,1025 467,983 470,1015 476,1018 482,998 488,1000 495,997 500,1025 505,1010 510,1045 515,1015 528,1027 540,1015 550,1020 575,1018 585,1012 590,1040 595,990 603,1018 610,1008 620,1012 628,1045 635,1015 645,1028 655,1018 670,1030 680,1015 690,1028 700,1020 710,1030 720,1025 735,1030 745,1020 755,1032 765,1025 775,1030 785,1025 795,1032 810,1025 820,1032 835,1025 845,1032 860,1025 865,1018 873,1032 885,1020 895,1032 905,1018 915,1022 931,1008 937,1018 943,1018 955,1025 965,1015 972,1030 980,1018 988,1020 995,1030 1005,1018 1030,1020 1037,1040 1043,1018 1055,1022 1075,1025 1090,1022 1100,1028 1110,1022 1120,1027 1140,1022 1180,1020 1200,1025 1240,1030 1250,1025 1260,1030 1275,1025 1290,1025 1308,1018 1313,1045 1320,1050 1340,1053 1385,1055 1388,1028 1393,1050 1405,1045 1420,1050 1430,1047 1445,1055 1450,1030 1472,1030`);

const used = read([[-7.296, .10554]], 1057, 854, `69,347 80,347 84,366 110,364 150,362 155,359 200,359 215,357 260,355 295,353 300,358 340,357 350,353 380,352 385,349 415,347 420,353 522,352 526,354 590,354 625,351 640,348 660,341 700,340 740,337 790,335 812,331 818,326 824,328 834,320 840,324 843,331 862,331 866,341 882,341 888,345 930,343 1000,341 1260,339 1312,337 1318,341 1450,341 1480,339 1495,338 1499,347 1509,348 1513,366 1525,365 1534,363`);

// Bursty series: low chatter by region, with isolated peaks laid over it.
function bursts(strip, base, span, last, regions, peaks, seed) {
  const h = [];
  let s = seed;
  const rnd = () => (s = (s * 16807) % 2147483647) / 2147483647;
  for (let x = 60; x <= last; x++) {
    const r = regions.find(q => x < q[0]);
    const n = rnd();
    h[x] = r[2] + n * n * n * r[1];
  }
  peaks.trim().split(/\s+/).forEach(p => {
    const [x, y] = p.split(',').map(Number);
    h[x] = base - y;
  });
  const pts = [];
  for (let x = 60; x <= last; x++) pts.push([Math.max(0, Math.min(MINUTES, strip[0] + x * strip[1])), h[x] / span]);
  return pts;
}
const diskStrip = [-6.255, .10467];
const write = bursts(diskStrip, 1069, 857, 1536, [[110, 8, 3], [165, 45, 5], [185, 8, 4], [240, 50, 7], [330, 35, 7], [365, 70, 10], [415, 60, 8], [470, 15, 5], [500, 8, 3], [530, 40, 5], [570, 6, 3], [610, 60, 7], [670, 120, 10], [760, 40, 5], [800, 14, 9], [845, 130, 8], [880, 80, 6], [970, 40, 6], [1230, 4, 4], [1330, 9, 3], [1450, 1, 4], [1480, 20, 3], [1600, 45, 4]],
`65,1022 69,958 73,1022 86,1013 91,951 99,1002 114,954 129,978 132,1020 140,1002 143,965 147,876 149,992 161,971 180,1032 189,840 191,950 198,987 200,926 202,985 207,888 214,960 220,900 222,1010 261,1008 275,1006 290,921 336,993 340,876 343,940 347,885 345,950 355,1005 373,912 377,985 380,870 382,846 385,970 401,912 412,985 429,1027 506,1003 524,993 529,975 592,988 597,1005 603,999 615,1000 624,965 627,945 629,935 631,884 634,968 638,960 640,1000 648,930 650,980 652,873 653,920 655,925 658,900 660,960 663,955 666,930 668,985 677,1025 683,1020 711,1018 723,927 743,1010 748,964 793,915 812,760 813,765 815,379 816,880 818,965 821,950 826,760 827,890 829,815 831,715 832,669 834,750 836,990 838,990 850,872 855,1022 860,995 865,932 869,995 871,975 888,1018 915,1020 918,1018 930,1020 937,951 941,975 948,1020 963,933 967,968 1256,1015 1270,1005 1274,985 1275,985 1277,1000 1301,1042 1319,1040 1481,1015 1494,945 1498,890 1509,975 1515,900 1527,1015 1531,1008 1533,1020`, 77);
const readSeries = bursts(diskStrip, 1069, 857, 1536, [[1600, 4, 1]], '100,1060 147,1010 200,1040 347,1010 382,1030 640,1030 666,950 797,813 801,1025 807,864 821,1000 834,990 863,1000 877,955 896,1010 1498,960 1501,884 1533,1035', 5);
const netStrip = [-7.296, .10554];
const receive = bursts(netStrip, 926, 714, 1532, [[1600, 5, 1]],
`84,852 101,774 196,780 205,903 206,903 207,900 208,900 209,897 210,896 211,897 212,899 213,898 214,900 215,899 216,902 217,902 218,901 219,902 220,902 221,902 222,902 223,901 224,912 251,903 252,901 253,901 254,901 255,910 281,913 291,777 386,775 480,777 489,903 490,903 491,903 492,898 493,896 494,896 495,899 496,901 497,901 498,901 499,902 500,902 501,902 502,901 503,902 504,902 505,902 506,901 507,902 508,914 526,620 535,908 536,899 537,899 538,899 539,908 570,908 575,774 669,774 714,912 764,777 773,905 774,902 775,898 776,895 777,885 778,895 779,903 780,900 781,880 782,895 783,898 784,902 785,902 786,901 787,902 788,902 789,901 790,902 791,902 792,910 810,914 819,908 820,901 821,901 822,901 823,908 859,777 954,768 1000,912 1048,774 1058,905 1059,902 1060,902 1061,897 1062,894 1063,897 1064,901 1065,900 1066,897 1067,896 1068,898 1069,902 1070,901 1071,901 1072,901 1073,902 1074,902 1075,902 1076,912 1097,910 1103,908 1104,901 1105,901 1106,901 1107,908 1143,774 1238,780 1301,910 1333,774 1341,906 1342,902 1343,902 1344,901 1345,897 1346,895 1347,901 1348,899 1349,897 1350,897 1351,901 1352,900 1353,900 1354,901 1355,901 1356,900 1357,901 1358,901 1359,901 1360,905 1387,908 1388,901 1389,901 1390,901 1391,908 1427,774 1514,850 1522,780`, 11);
const transmit = bursts(netStrip, 926, 714, 1532, [[1600, 4, 1]],
`84,905 101,882 139,876 142,890 196,890 210,915 291,880 317,893 338,892 371,893 386,890 400,870 412,890 480,880 494,917 525,480 526,264 575,880 589,917 632,876 646,867 652,895 667,880 669,878 678,890 685,876 718,874 764,882 771,876 777,900 780,903 859,880 873,917 919,876 935,892 954,882 967,915 1048,882 1143,882 1158,916 1195,892 1238,890 1301,876 1333,882 1427,884 1478,892 1514,905 1522,882`, 23);

const zero = flat(0);
// fill: [upper, lower, colour, opacity]; line: [points, colour, width]
const charts = {
  load: {
    fills: [[load1, zero, '#7eb26d', .1], [load5, zero, '#5195ce', .1], [load15, zero, '#e24d42', .1]],
    lines: [[load1, '#7eb26d', 1.500], [load5, '#5195ce', 1.500], [load15, '#e24d42', 2]]
  },
  swap: {
    fills: [[flat(.3065), zero, '#ef843c', .3], [flat(.927), flat(.3065), '#e24d42', .3]],
    lines: [[zero, '#00e000', 1], [flat(.3065), '#ef843c', 2], [flat(.927), '#e24d42', 2]]
  },
  memory: {
    fills: [[memUsed, zero, '#ff0000', .3], [memSlabU, memUsed, '#ff00ff', .3], [memSlabR, memSlabU, '#ff78f8', .3], [memBuf, memSlabR, '#ffb000', .3], [memCached, memBuf, '#0000ff', .3], [flat(.9015), memCached, '#00e000', .3]],
    lines: [[memUsed, '#ff0000', 1], [memSlabU, '#ff00ff', 1.500], [memSlabR, '#ff78f8', 1], [memBuf, '#e89a10', 1], [memCached, '#0010ff', 1], [flat(.9015), '#00c800', 2]]
  },
  swapio: {
    fills: [[flat(.3065), zero, '#7eb26d', .3], [flat(.927), flat(.3065), '#eab839', .3]],
    lines: [[flat(.3065), '#8fae66', 2], [flat(.927), '#eab839', 2]]
  },
  cpu: {
    fills: [[system, zero, '#ff0000', .4], [nice, system, '#0000ff', .4], [flat(.8), nice, '#ffffff', .4]],
    lines: [[zero, '#ff00c8', 2], [system, '#f08a18', 1], [nice, '#22e040', 1.250], [flat(.799), '#ffffff', 1]]
  },
  disk: {
    fills: [[used, zero, '#ea6460', .1], [flat(.936), used, '#629e51', .1]],
    lines: [[used, '#ea6460', 1.500], [flat(.936), '#568b49', 2]]
  },
  traffic: {
    fills: [[write, zero, '#eab839', .5]],
    lines: [[write, '#eab839', 1], [readSeries, '#7eb26d', 1], [flat(.006), '#d8ab38', 2]]
  },
  net: {
    fills: [[receive, zero, '#5794f2', .1]],
    lines: [[receive, '#5794f2', 1.250], [transmit, '#73bf69', 1.250]]
  }
};

const svgEl = (name, attrs) => {
  const el = document.createElementNS('http://www.w3.org/2000/svg', name);
  Object.entries(attrs).forEach(([k, v]) => el.setAttribute(k, v));
  return el;
};

document.querySelectorAll('.chart').forEach(chart => {
  const { fills, lines } = charts[chart.dataset.chart];
  const rows = chart.querySelectorAll('.y-axis span').length - 1;
  const svg = svgEl('svg', { class: 'plot', viewBox: `0 0 ${MINUTES} 1`, preserveAspectRatio: 'none', role: 'img' });

  fills.forEach(([upper, lower, fill, opacity]) => {
    const d = path(upper) + path([...lower].reverse()).replace('M', 'L') + 'Z';
    svg.append(svgEl('path', { class: 'fill', d, style: `fill:${fill};fill-opacity:${opacity}` }));
  });
  for (let i = 0; i <= rows; i++) {
    svg.append(svgEl('line', { class: 'grid', x1: 0, x2: MINUTES, y1: i / rows, y2: i / rows }));
  }
  const xAxis = document.createElement('div');
  xAxis.className = 'x-axis';
  for (let i = 0; i < 15; i++) {
    const t = FIRST_TICK + i * 10;
    svg.append(svgEl('line', { class: 'grid', x1: t, x2: t, y1: 0, y2: 1 }));
    const label = document.createElement('span');
    const m = 290 + i * 10;
    label.textContent = String(Math.floor(m / 60)).padStart(2, '0') + ':' + String(m % 60).padStart(2, '0');
    xAxis.append(label);
  }
  lines.forEach(([pts, stroke, width]) => svg.append(svgEl('path', { d: path(pts), stroke, 'stroke-width': width })));
  chart.append(svg, xAxis);
});
```
